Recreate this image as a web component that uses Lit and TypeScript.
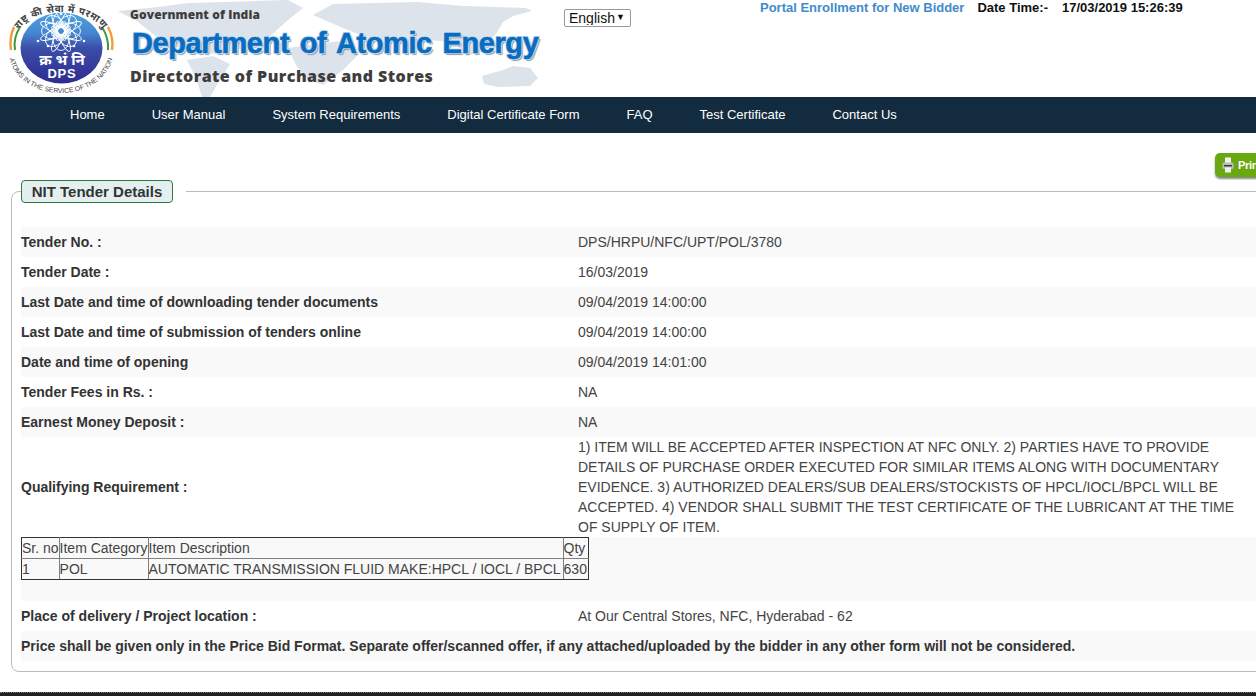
import { LitElement, html, css, svg } from "lit";
import { customElement } from "lit/decorators.js";

const NAV = ["Home", "User Manual", "System Requirements", "Digital Certificate Form", "FAQ", "Test Certificate", "Contact Us"];
const ROWS1: [string, string][] = [
  ["Tender No. :", "DPS/HRPU/NFC/UPT/POL/3780"],
  ["Tender Date :", "16/03/2019"],
  ["Last Date and time of downloading tender documents", "09/04/2019 14:00:00"],
  ["Last Date and time of submission of tenders online", "09/04/2019 14:00:00"],
  ["Date and time of opening", "09/04/2019 14:01:00"],
  ["Tender Fees in Rs. :", "NA"],
  ["Earnest Money Deposit :", "NA"],
  ["Qualifying Requirement :", "1) ITEM WILL BE ACCEPTED AFTER INSPECTION AT NFC ONLY. 2) PARTIES HAVE TO PROVIDE DETAILS OF PURCHASE ORDER EXECUTED FOR SIMILAR ITEMS ALONG WITH DOCUMENTARY EVIDENCE. 3) AUTHORIZED DEALERS/SUB DEALERS/STOCKISTS OF HPCL/IOCL/BPCL WILL BE ACCEPTED. 4) VENDOR SHALL SUBMIT THE TEST CERTIFICATE OF THE LUBRICANT AT THE TIME OF SUPPLY OF ITEM."],
];

const petals = [0, 45, 90, 135, 180, 225, 270, 315];

const logo = svg`
<svg class="logo" width="118" height="97" viewBox="0 0 118 97">
  <defs>
    <linearGradient id="g" x1="0" y1="0" x2="0" y2="1">
      <stop offset="0" stop-color="#4ea3e4"/><stop offset=".3" stop-color="#4585cf"/><stop offset=".5" stop-color="#3a4ea8"/><stop offset="1" stop-color="#2f2b92"/>
    </linearGradient>
    <path id="top" d="M17 37 A44 25 0 0 1 105 37"/>
    <path id="bot" d="M9 52 A52 41 0 0 0 113 52"/>
  </defs>
  <path d="M14 27 Q9 38 11 50" fill="none" stroke="#f39a3a" stroke-width="2.400"/>
  <path d="M20 27 Q13 38 15 50" fill="none" stroke="#3c9a45" stroke-width="2"/>
  <path d="M108 27 Q114 38 112 50" fill="none" stroke="#f39a3a" stroke-width="2.400"/>
  <path d="M102 27 Q109 38 108 50" fill="none" stroke="#3c9a45" stroke-width="2"/>
  <ellipse cx="61.500" cy="48" rx="41" ry="35.500" fill="url(#g)"/>
  <g fill="none" stroke="#fff" stroke-width=".9">
    ${petals.map((a) => svg`<ellipse cx="61" cy="23" rx="8" ry="11.500" transform="rotate(${a} 61 31)"/>`)}
    ${petals.map((a) => svg`<ellipse cx="61" cy="25" rx="4" ry="16" transform="rotate(${a + 22.5} 61 31)"/>`)}
  </g>
  <g fill="#fff">
    <circle cx="38" cy="41" r="1.300"/><circle cx="84" cy="41" r="1.300"/><circle cx="48" cy="46" r="1.300"/><circle cx="74" cy="46" r="1.300"/><circle cx="61" cy="14" r="1.300"/>
  </g>
  <text x="62" y="65" text-anchor="middle" class="hi">क्र भं नि</text>
  <text x="62" y="78" text-anchor="middle" class="dps">DPS</text>
  <text class="arc-t"><textPath href="#top" startOffset="50%" text-anchor="middle">राष्ट्र की सेवा में परमाणु</textPath></text>
  <text class="arc-b"><textPath href="#bot" startOffset="50%" text-anchor="middle">ATOMS IN THE SERVICE OF THE NATION</textPath></text>
</svg>`;

const map = svg`
<svg class="map" width="440" height="97" viewBox="0 0 440 97">
  <g fill="#dde3eb">
    <path d="M0 11 L40 7 L70 3 L170 0 L185 8 L170 20 L150 38 L125 48 L100 54 L70 52 L40 38 L20 22 Z"/>
    <path d="M195 15 L215 4 L300 2 L345 6 L408 8 L414 11 L395 16 L385 22 L378 34 L362 50 L350 56 L335 42 L310 40 L285 44 L250 38 L225 28 Z"/>
    <path d="M170 48 L230 40 L240 55 L225 70 L205 85 L190 80 L178 65 Z"/>
    <path d="M69 60 L95 56 L112 64 L102 80 L92 97 L84 97 L78 78 Z"/>
    <path d="M364 76 L385 70 L395 66 L412 68 L420 78 L412 86 L380 87 L366 84 Z"/>
  </g>
</svg>`;

const printer = svg`
<svg width="12" height="16" viewBox="0 0 12 16">
  <rect x="3" y="0.500" width="6" height="6" fill="#f2f2f2"/>
  <rect x="0.500" y="5.500" width="11" height="6.500" rx="1.500" fill="#b9bdb9"/>
  <rect x="2" y="8" width="8" height="1.400" fill="#333"/>
  <rect x="3" y="10.500" width="6" height="5" fill="#eee"/>
</svg>`;

@customElement("app-root")
export class AppRoot extends LitElement {
  static styles = css`
    :host { display: block; width: 100%; height: 696px; overflow: hidden; background: #fff; font-family: "Liberation Sans", Arial, sans-serif; font-size: 14px; color: #333; position: relative; }
    .header { height: 97px; display: flex; align-items: flex-start; }
    .logo { flex: none; }
    .hi { font: 700 15px "Noto Sans", "Noto Sans CJK SC", sans-serif; fill: #fff; }
    .dps { font: 700 13px "Liberation Sans", sans-serif; fill: #fff; letter-spacing: .8px; }
    .arc-t { font: 700 10px "Noto Sans", sans-serif; fill: #444; letter-spacing: .6px; }
    .arc-b { font: 400 6.800px "Liberation Sans", sans-serif; fill: #444; }
    .brand { position: relative; width: 446px; height: 97px; flex: none; box-sizing: border-box; padding: 6px 0 0 12px; }
    .map { position: absolute; left: 0; top: 0; filter: blur(.5px); }
    .gov, .title, .dir { position: relative; white-space: nowrap; }
    .gov { font-family: "Open Sans", sans-serif; font-weight: 800; font-size: 12px; line-height: 17px; color: #3d3d3d; letter-spacing: .1px; }
    .title { font-family: "Liberation Sans", sans-serif; font-weight: 700; font-size: 29px; line-height: 34px; margin: 3px 0 0 2px; color: #0a6cc0; letter-spacing: -.4px; word-spacing: 3px; -webkit-text-stroke: .6px #0a6cc0; text-shadow: 1px 1px 0 #cfe2f2, -1px -1px 0 #cfe2f2, 1px -1px 0 #cfe2f2, -1px 1px 0 #cfe2f2, 2px 2px 1px #8a9bb0; }
    .dir { font-family: "Open Sans", sans-serif; font-weight: 800; font-size: 16px; line-height: 22px; margin-top: 5px; color: #3d3d3d; letter-spacing: .45px; }
    .lang-wrap { flex: none; position: relative; margin-top: 9px; width: 67px; height: 18px; }
    .lang { appearance: none; display: block; width: 67px; height: 18px; box-sizing: border-box; font: 14px "Liberation Sans", sans-serif; background: #fff; border: 1px solid #999; border-radius: 2px; color: #111; padding: 0 0 1px 4px; margin: 0; }
    .arrow { position: absolute; left: 52px; top: 3px; font-size: 9px; line-height: 10px; color: #111; pointer-events: none; }
    .top { flex: none; margin-left: 129px; display: flex; align-items: baseline; white-space: nowrap; line-height: 15px; }
    .portal { color: #428bca; font-weight: 700; font-size: 13px; }
    .dt { color: #111; font-weight: 700; font-size: 13px; margin-left: 13px; }
    .dv { color: #111; font-weight: 700; font-size: 13px; margin-left: 14px; }
    nav { height: 36px; box-sizing: border-box; padding: 0 0 2px 70px; background: #132b3f; display: flex; align-items: center; gap: 47px; color: #fff; font-size: 13px; white-space: nowrap; }
    .print-row { display: flex; padding: 20px 0 0 1215px; height: 47px; box-sizing: border-box; }
    .print { flex: none; width: 50px; height: 24px; background: #6aa810; border-radius: 5px 0 0 5px; box-shadow: 0 2px 2px #888; color: #fff; display: flex; align-items: center; gap: 4px; padding-left: 7px; box-sizing: border-box; font: 700 11px "Liberation Sans", sans-serif; letter-spacing: -.3px; }
    fieldset { margin: 0 -20px 0 11px; padding: 0 0 10px 9px; border: 1px solid #bbb; border-radius: 8px; height: 492px; box-sizing: border-box; }
    legend { margin-left: 0; padding: 0 13px 0 0; }
    .lg { display: block; width: 152px; height: 23px; box-sizing: border-box; border: 1px solid #2d7a3a; border-radius: 4px; background: #e4f0f0; color: #333; font-weight: 700; font-size: 15px; line-height: 21px; text-align: center; }
    .rows { margin-top: 24px; }
    .row { display: grid; grid-template-columns: 557px 1fr; align-items: center; min-height: 30px; }
    .row:nth-child(odd) { background: #f9f9f9; }
    .l { font-weight: 700; color: #333; }
    .v { color: #444; line-height: 20px; width: 660px; }
    .tbl-row { height: 64px; background: #f9f9f9; }
    table { border-collapse: collapse; font-size: 14px; color: #444; }
    td { border: 1px solid #808080; padding: 0; line-height: 20px; white-space: nowrap; }
    tr:first-child td { border-top-color: #333; }
    tr:last-child td { border-bottom-color: #333; }
    td:first-child { border-left-color: #333; }
    td:nth-child(3) { padding-right: 2px; }
    td:last-child { border-right-color: #333; padding-right: 1px; }
    .full { min-height: 30px; display: flex; align-items: center; font-weight: 700; background: #f9f9f9; }
    .row.place { background: #fff; }
    footer { position: absolute; left: 0; right: 0; bottom: 0; height: 4px; background: #222; border-top: 1px dotted #777; box-sizing: border-box; }
  `;
  render() {
    return html`
      <div class="header">
        ${logo}
        <div class="brand">
          ${map}
          <div class="gov">Government of India</div>
          <div class="title">Department of Atomic Energy</div>
          <div class="dir">Directorate of Purchase and Stores</div>
        </div>
        <div class="lang-wrap">
          <select class="lang"><option>English</option></select>
          <span class="arrow">▼</span>
        </div>
        <div class="top">
          <span class="portal">Portal Enrollment for New Bidder</span>
          <span class="dt">Date Time:-</span>
          <span class="dv">17/03/2019 15:26:39</span>
        </div>
      </div>
      <nav>${NAV.map((n) => html`<span>${n}</span>`)}</nav>
      <div class="print-row"><div class="print">${printer}<span>Print</span></div></div>
      <fieldset>
        <legend><span class="lg">NIT Tender Details</span></legend>
        <div class="rows">
          ${ROWS1.map(([l, v]) => html`<div class="row"><div class="l">${l}</div><div class="v">${v}</div></div>`)}
          <div class="tbl-row">
            <table>
              <tr><td>Sr. no</td><td>Item Category</td><td>Item Description</td><td>Qty</td></tr>
              <tr><td>1</td><td>POL</td><td>AUTOMATIC TRANSMISSION FLUID MAKE:HPCL / IOCL / BPCL</td><td>630</td></tr>
            </table>
          </div>
          <div class="row place"><div class="l">Place of delivery / Project location :</div><div class="v">At Our Central Stores, NFC, Hyderabad - 62</div></div>
          <div class="full">Price shall be given only in the Price Bid Format. Separate offer/scanned offer, if any attached/uploaded by the bidder in any other form will not be considered.</div>
        </div>
      </fieldset>
      <footer></footer>
    `;
  }
}
